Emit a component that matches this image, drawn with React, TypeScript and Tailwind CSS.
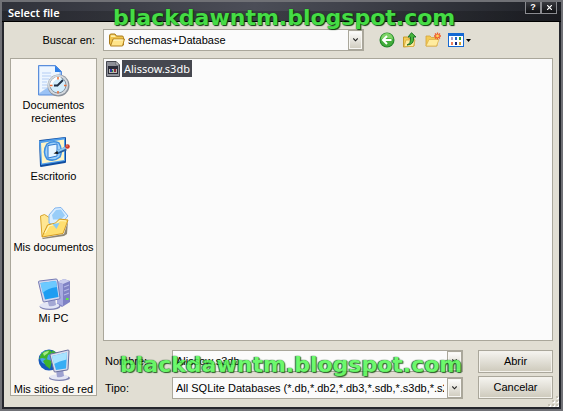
import React from "react";

const chevron = (
  <svg viewBox="0 0 5 4" className="h-1 w-[5px]" fill="none" stroke="#222" strokeWidth="1.1">
    <path d="M.3 .5 2.500 2.800 4.700 .5" />
  </svg>
);

const dropFace =
  "flex w-[15px] shrink-0 items-center justify-center border border-[#aaa79b] bg-gradient-to-b from-white to-[#cfcbbd] shadow-[inset_0_0_0_1px_#f8f7f3]";
const frame = "border border-[#aaa79b] bg-[#fbfbfb]";
const face =
  "border border-[#aaa79b] bg-gradient-to-b from-[#f6f5f1] to-[#cdc9bb] shadow-[inset_0_0_0_1px_#f4f2ec]";
const caption =
  "flex h-3 w-4 items-center justify-center border border-t-0 border-[#8a8b90] bg-gradient-to-b from-[#3a3b41] to-[#0f1013] text-white";

function RecentIcon() {
  return (
    <svg viewBox="0 0 32 32" className="size-8">
      <path d="M.5 .5h17l6 6V30H.5z" fill="#9cc3f5" stroke="#5b8edb" />
      <path d="M1.500 1.500h15l5 6v7L1.500 28z" fill="#eef6ff" />
      <path d="M17 .5v6.500h6.500z" fill="#2f80e8" />
      <path d="M4 8h9M4 11h9M4 14h7M4 17h5M4 20h5M4 23h5" stroke="#b4cdf4" />
      <circle cx="20.500" cy="20.500" r="11" fill="#8b929c" />
      <circle cx="20" cy="20" r="10.200" fill="#d4d9de" />
      <circle cx="20" cy="20" r="8" fill="#d3edfc" stroke="#8593a1" />
      <path d="M13.500 22a7 7 0 0 1 9-8.500" fill="none" stroke="#fff" strokeWidth="2.500" />
      <path d="m19 21 6-6M20 20.500h-4" stroke="#1e2f45" strokeWidth="1.800" />
      <path d="M20 12v2.500M20 26v2.500M12 20.500h2.500M26 20.500h2.500" stroke="#ee7035" strokeWidth="1.500" />
    </svg>
  );
}

function DesktopIcon() {
  return (
    <svg viewBox="0 0 32 32" className="size-8">
      <path d="M1 5q0-1 1-1L27 1q1 0 1 1v24q0 1-1 1L3 31q-1 0-1-1z" fill="#0f4da0" />
      <path d="M1 5 27 1.500V25L3 29z" fill="#4f9dea" />
      <path d="M3 7 26 3.500V24L4 27.500z" fill="#fff4c4" />
      <path d="M9 8q6-4 12-1 4 7 1 14-6 5-13 2-5-7 0-15z" fill="#9fd0f8" stroke="#3e90e2" strokeWidth="1.500" />
      <path d="m10 9.500 9-1.500v12l-9 2z" fill="#e9f6ff" stroke="#2c78d0" />
      <path d="m19 16.500 9-4" stroke="#265f9e" strokeWidth="4" />
      <path d="m19 15.500 9-4" stroke="#8cc7f2" strokeWidth="2" />
      <path d="m15.500 17.500 4-2.500.5 3z" fill="#111" />
      <circle cx="29.500" cy="10.500" r="2.300" fill="#cf3a28" />
      <circle cx="29" cy="10" r=".8" fill="#f49a82" />
    </svg>
  );
}

function DocumentsIcon() {
  return (
    <svg viewBox="0 0 32 32" className="size-8">
      <path d="M4 31 26 27l4-13-1 13-3 2-21 3z" fill="#8e8776" />
      <path d="m2.500 9 4-1.500L12 11h5v12L4 29.500z" fill="#ffe793" stroke="#d8a52b" />
      <path d="M11 8 17 1l6-.500L30 9 20 20l-9-4z" fill="#d9edff" stroke="#7fb4ee" />
      <path d="m14 8 4-5 5-.5 4 6-4 4h-8z" fill="#98cdf8" />
      <path d="M4 30 9.500 18l8-2 4-4 8.500 1-5 13.500z" fill="#ffdf70" stroke="#d49b20" />
      <path d="m7 26 4-7 7-2 4-3.500 6 .500" fill="none" stroke="#fff6bd" strokeWidth="1.200" />
      <path d="m14.500 17 7-1-3 6z" fill="#88caf5" />
    </svg>
  );
}

function ComputerIcon() {
  return (
    <svg viewBox="0 0 32 32" className="size-8">
      <path d="m19 4 7-3 6 2v21l-8 5-5-3z" fill="#7f82c4" />
      <path d="m19 4 7-3 6 2-7 3z" fill="#cccfee" />
      <path d="m19 4 6 2v22l-6-3z" fill="#a9ace0" />
      <path d="m26 9 5-2M26 13l5-2M26 17l5-2" stroke="#b4b7e6" strokeWidth="1.200" />
      <path d="M28 21h2.500" stroke="#5eea48" strokeWidth="2" />
      <ellipse cx="12" cy="28.500" rx="10.500" ry="3.500" fill="#7f83b6" />
      <ellipse cx="11.500" cy="27.500" rx="9.800" ry="3.200" fill="#e3e6f6" />
      <path d="m9 21 8-1 1 7q-4 2-7 1z" fill="#a4a8d4" />
      <path d="M.5 4q0-1 1-1L18 1q1 0 1.500 1L22 20q0 1-1 1L6 24q-1 0-1-1z" fill="#d4d8ee" stroke="#7479b4" />
      <path d="m2.500 5 15.500-2 2.500 16-13.500 2.500z" fill="#1e9df2" />
      <path d="m2.500 5 15.500-2 1 6q-9 1-14.500 6z" fill="#6cc9ff" />
    </svg>
  );
}

function NetworkIcon() {
  return (
    <svg viewBox="0 0 32 32" className="size-8">
      <circle cx="11" cy="11" r="10.500" fill="#1559bc" />
      <circle cx="9" cy="8.500" r="7" fill="#4aa5ee" />
      <path d="M3 5q4-4 9-4l3 3-5 2-1 4-5-1-3 1zM8 10l6 2-2 8-4-3-3-5zM14 1l5 3-4 3z" fill="#3fb42c" />
      <path d="M5 4q3-2 6-2l-1 2-4 3z" fill="#a5ec85" />
      <ellipse cx="21.500" cy="29" rx="10.500" ry="3" fill="#7c80b0" />
      <ellipse cx="21" cy="28" rx="9.500" ry="2.800" fill="#e4e6f4" />
      <path d="m18 21 7-1 1 7q-4 2-7 1z" fill="#9ea2d0" />
      <path d="M12 6q0-1 1-1l17-4q1 0 1 1l-1 18q0 1-1 1l-12 2q-1 0-1-1z" fill="#dadded" stroke="#686d9d" />
      <path d="m14 7 15-3.500-1 16L18 21z" fill="#38aef5" />
      <path d="m14 7 15-3.500-.500 7Q21 12 16 15z" fill="#a8e3ff" />
    </svg>
  );
}

function FolderIcon({ className }: { className: string }) {
  return (
    <svg viewBox="0 0 16 14" className={className}>
      <path d="M.5 3Q.5 1 2 1h4l1.500 2H13q1.500 0 1.500 1.500V12H2Q.5 12 .5 10z" fill="#f0c44e" stroke="#a87a1c" />
      <path d="M2 2.200h3.500L7 4H2z" fill="#fff1a7" />
      <path d="M4 6h11.500L13.500 13H1.500z" fill="#ffe48a" stroke="#b58420" />
      <path d="M4.800 7h9" stroke="#fff8cc" />
    </svg>
  );
}

function DatabaseFileIcon() {
  return (
    <svg viewBox="0 0 16 16" className="size-4">
      <path d="M1.500 .5h9.500L14.500 4v11.500h-13z" fill="#8e9098" stroke="#45474f" />
      <path d="M11 .5V4h3.500z" fill="#d8d8de" stroke="#45474f" strokeWidth=".6" />
      <path d="M3 5h10v8H3z" fill="#2a2b38" />
      <path d="M4 8h8v4H4z" fill="#b9b7b0" />
      <path d="M5 8h2v3H5z" fill="#2c3aa0" />
      <path d="M9 8h2v3H9z" fill="#8a2f3c" />
      <path d="M7 9h1v2H7z" fill="#2d8a39" />
    </svg>
  );
}

const places = [
  { label: "Documentos recientes", Icon: RecentIcon },
  { label: "Escritorio", Icon: DesktopIcon },
  { label: "Mis documentos", Icon: DocumentsIcon },
  { label: "Mi PC", Icon: ComputerIcon },
  { label: "Mis sitios de red", Icon: NetworkIcon },
];

const viewDots = [
  { x: 3, y: 5, color: "#a99cc8" },
  { x: 7, y: 5, color: "#2468c8" },
  { x: 11, y: 5, color: "#2b9a3c" },
  { x: 3, y: 10, color: "#ee7d5c" },
  { x: 7, y: 10, color: "#15257c" },
  { x: 11, y: 10, color: "#cfa02c" },
];

const gripDots = [
  [9, 1], [5, 5], [9, 5], [1, 9], [5, 9], [9, 9],
];

function Watermark({ className }: { className: string }) {
  return (
    <div
      className={`pointer-events-none absolute font-['DejaVu_Sans',sans-serif] text-[22px] leading-6 font-bold whitespace-nowrap ${className}`}
    >
      blackdawntm.blogspot.com
    </div>
  );
}

export default function App() {
  return (
    <div className="relative flex h-screen flex-col border-2 border-[#707176] bg-[#25272d] font-['Liberation_Sans',Arial,sans-serif] text-[11px] leading-[13px] text-black">
      <header className="flex h-5 shrink-0 items-start justify-between border-b border-black bg-[linear-gradient(to_bottom,transparent_45%,rgba(0,0,0,0.2)_45%),linear-gradient(100deg,#30323a,#4b4d57_45%,#41434c_60%,#1f2127)] pl-1.5">
        <h1 className="font-['Noto_Sans',sans-serif] text-[11px] leading-[22px] font-semibold text-white">Select file</h1>
        <div className="mr-1 flex">
          <button aria-label="Ayuda" className={`${caption} text-[9px] leading-[9px] font-bold`}>?</button>
          <button aria-label="Cerrar" className={caption}>
            <svg viewBox="0 0 5 5" className="size-[5px]" stroke="#fff" strokeWidth="1.200"><path d="M0 0l5 5M5 0 0 5" /></svg>
          </button>
        </div>
      </header>

      <main className="mx-0.5 mb-0.5 flex min-h-0 flex-1 flex-col gap-[7px] bg-[#e1ded3] pt-[7px] pr-1.5 pb-2 pl-1.5">
        <div className="flex h-[22px] shrink-0 items-center">
          <label htmlFor="folder" className="w-[87px] shrink-0 pr-0.5 text-right">Buscar en:</label>
          <div className={`relative ml-1.5 flex h-[22px] w-[261px] ${frame}`}>
            <FolderIcon className="pointer-events-none absolute top-[3px] left-[5px] h-[14px] w-4" />
            <select id="folder" className="min-w-0 flex-1 appearance-none bg-transparent pl-6">
              <option>schemas+Database</option>
            </select>
            <span className={`pointer-events-none ${dropFace}`}>{chevron}</span>
          </div>
          <div className="ml-[15px] flex items-center gap-[7px]">
            <button aria-label="Atrás">
              <svg viewBox="0 0 16 16" className="size-4">
                <circle cx="8" cy="8" r="7.500" fill="#23862a" />
                <circle cx="8" cy="8" r="6.500" fill="#43ad3b" />
                <path d="M2 7a6 6 0 0 1 12 0q-6-2-12 0z" fill="#7fd468" />
                <path d="M12.500 8H4.500M8 4 4 8l4 4" fill="none" stroke="#fff" strokeWidth="2" />
              </svg>
            </button>
            <button aria-label="Subir un nivel">
              <svg viewBox="0 0 16 16" className="size-4">
                <path d="M1.500 5h4l1.500 1.500h5V14l-10.500 1z" fill="#f3cb56" stroke="#c59a2b" />
                <path d="M4 8h9l-1.500 6.500H2z" fill="#ffec9f" stroke="#d1a537" strokeWidth=".7" />
                <path d="M5 13q4-1 3.500-8H6L9.500 .7 14 5h-2.500q1 8-6.500 8z" fill="#46b53d" stroke="#166b20" strokeWidth=".9" />
              </svg>
            </button>
            <button aria-label="Nueva carpeta">
              <svg viewBox="0 0 16 16" className="size-4">
                <path d="M1 4h4l1.500 1.500H12V14H1z" fill="#f3cb56" stroke="#d3a23a" strokeWidth=".8" />
                <path d="M4 7.500h10L11.500 14H1z" fill="#ffec9f" stroke="#dbae45" strokeWidth=".7" />
                <path d="M12.500 .5v7M9 4h7M10 1.500l5 5M15 1.500l-5 5" stroke="#ee5a2b" strokeWidth="1.300" />
                <circle cx="12.500" cy="4" r="1.400" fill="#ffd45d" />
              </svg>
            </button>
            <button aria-label="Vistas" className="flex items-center gap-0.5">
              <svg viewBox="0 0 16 16" className="size-4" shapeRendering="crispEdges">
                <path d="M0 1h16v14H0z" fill="#1468d2" />
                <path d="M1 4h14v10H1z" fill="#fff" />
                {viewDots.map((d) => (
                  <rect key={`${d.x}-${d.y}`} x={d.x} y={d.y} width="2" height="3" fill={d.color} />
                ))}
              </svg>
              <svg viewBox="0 0 5 3" className="h-[3px] w-[5px]"><path d="M0 0h5L2.500 3z" /></svg>
            </button>
          </div>
        </div>

        <div className="flex min-h-0 flex-1 gap-1.5">
          <nav className="mb-[3px] flex w-[87px] shrink-0 flex-col border border-[#aaa79b] bg-[#faf7f2] pt-1.5">
            {places.map(({ label, Icon }) => (
              <button key={label} className="flex h-[71px] shrink-0 flex-col items-center gap-0.5 text-center last:h-auto">
                <Icon />
                <span>{label}</span>
              </button>
            ))}
          </nav>

          <div className="flex min-w-0 flex-1 flex-col gap-[9px]">
            <section className={`min-h-0 flex-1 p-px ${frame}`}>
              <button className="flex items-center gap-px">
                <DatabaseFileIcon />
                <span className="bg-[#45474f] px-0.5 font-['Noto_Sans',sans-serif] text-[11px] leading-[17px] text-white">Alissow.s3db</span>
              </button>
            </section>
            <div className="flex shrink-0 gap-[15px]">
              <div className="flex min-w-0 flex-1 flex-col gap-[5px]">
                <div className="flex h-[22px] items-center">
                  <label htmlFor="name" className="w-[69px] shrink-0 pl-0.5">Nombre:</label>
                  <div className={`flex h-[22px] min-w-0 flex-1 ${frame}`}>
                    <input id="name" defaultValue="Alissow.s3db" className="min-w-0 flex-1 px-[3px]" />
                    <button aria-label="Nombres recientes" className={dropFace}>{chevron}</button>
                  </div>
                </div>
                <div className="flex h-[22px] items-center">
                  <label htmlFor="type" className="w-[69px] shrink-0 pl-0.5">Tipo:</label>
                  <div className={`flex h-[22px] min-w-0 flex-1 ${frame}`}>
                    <select id="type" className="min-w-0 flex-1 appearance-none px-[3px]">
                      <option>All SQLite Databases (*.db,*.db2,*.db3,*.sdb,*.s3db,*.s2db)</option>
                    </select>
                    <span className={`pointer-events-none ${dropFace}`}>{chevron}</span>
                  </div>
                </div>
              </div>
              <div className="flex w-[75px] shrink-0 flex-col gap-[3px]">
                <button className={`h-[23px] ${face}`}>Abrir</button>
                <button className={`h-[23px] ${face}`}>Cancelar</button>
              </div>
            </div>
          </div>
        </div>
      </main>
      <svg viewBox="0 0 12 12" className="pointer-events-none absolute right-0.5 bottom-0.5 size-3">
        {gripDots.map(([x, y]) => (
          <g key={`${x}-${y}`}>
            <rect x={x + 1} y={y + 1} width="2" height="2" fill="#fff" />
            <rect x={x} y={y} width="2" height="2" fill="#c6c2b5" />
          </g>
        ))}
      </svg>
      <Watermark className="top-1 left-[111px] text-[#45dc45] [text-shadow:0_0_1px_#0b3a0b,1px_1px_1px_#0b3a0b]" />
      <Watermark className="top-[351px] left-[118px] text-[#55f855] opacity-85 [text-shadow:0_0_1px_#0d4a0d,1px_1px_1px_#0d4a0d,-1px_0_1px_#0d4a0d]" />
    </div>
  );
}
